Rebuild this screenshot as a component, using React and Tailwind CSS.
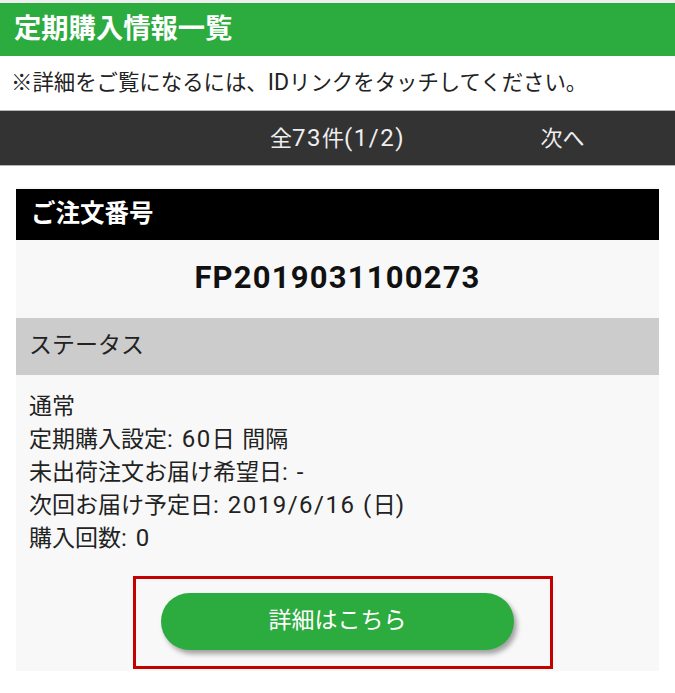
import React from "react";

const FONT = { fontFamily: 'Roboto, "Noto Sans CJK JP", "Noto Sans", sans-serif' };

function Mix({ text, latin }) {
  const parts = text.split(/([\x20-\x7E]+)/);
  return (
    <>
      {parts.map((p, i) =>
        /^[\x20-\x7E]+$/.test(p) ? (
          <span key={i} className={latin}>
            {p}
          </span>
        ) : (
          <React.Fragment key={i}>{p}</React.Fragment>
        )
      )}
    </>
  );
}

export default function App() {
  const lines = [
    "通常",
    "定期購入設定: 60日 間隔",
    "未出荷注文お届け希望日: -",
    "次回お届け予定日: 2019/6/16 (日)",
    "購入回数: 0",
  ];
  return (
    <div className="w-[675px] h-[693px] bg-white overflow-hidden flex flex-col" style={FONT}>
      <div className="h-[3px] bg-[#eeeeee]" />
      <div className="h-[53px] bg-[#2cab3f] flex items-center pl-[14px]">
        <h1 className="text-white font-bold text-[27.3px] leading-none">定期購入情報一覧</h1>
      </div>
      <div className="h-[54px] flex items-center pl-[11px] text-[21.4px] text-[#222]">
        <Mix text="※詳細をご覧になるには、IDリンクをタッチしてください。" latin="text-[23px]" />
      </div>
      <div className="h-[56px] bg-[#333333] border-y border-[#b5b5b5] grid grid-cols-3 items-center text-[22px] text-[#eeeeee]">
        <div />
        <div className="text-center">
          <Mix text="全73件(1/2)" latin="text-[24px] tracking-[1.5px]" />
        </div>
        <div className="text-center">次へ</div>
      </div>
      <div className="mt-[21px] mx-[16px] bg-[#f8f8f8] pt-[2px] pb-[2px] flex flex-col">
        <div className="h-[51px] bg-black flex items-center pl-[15px] text-white font-bold text-[24.5px]">
          ご注文番号
        </div>
        <div className="h-[78px] flex items-center justify-center pb-[2px]">
          <span className="font-bold text-[31px] tracking-[1.2px] text-[#111]">FP2019031100273</span>
        </div>
        <div className="h-[57px] bg-[#cccccc] flex items-center pl-[13px] text-[23px] text-[#222]">
          ステータス
        </div>
        <div className="pt-[15px] pl-[13px] flex flex-col text-[23px] leading-[33px] text-[#222]">
          {lines.map((l) => (
            <div key={l}>
              <Mix text={l} latin="text-[24px] tracking-[1.5px]" />
            </div>
          ))}
        </div>
        <div className="mt-[21px] ml-[117px] self-start border-[3px] border-[#c40000] pt-[14px] pb-[16px] pl-[25px] pr-[36px]">
          <button className="w-[353px] h-[57px] rounded-full bg-[#2cab3f] text-white text-[23px] shadow-[3px_4px_5px_rgba(0,0,0,0.35)] flex items-center justify-center">
            詳細はこちら
          </button>
        </div>
      </div>
    </div>
  );
}
